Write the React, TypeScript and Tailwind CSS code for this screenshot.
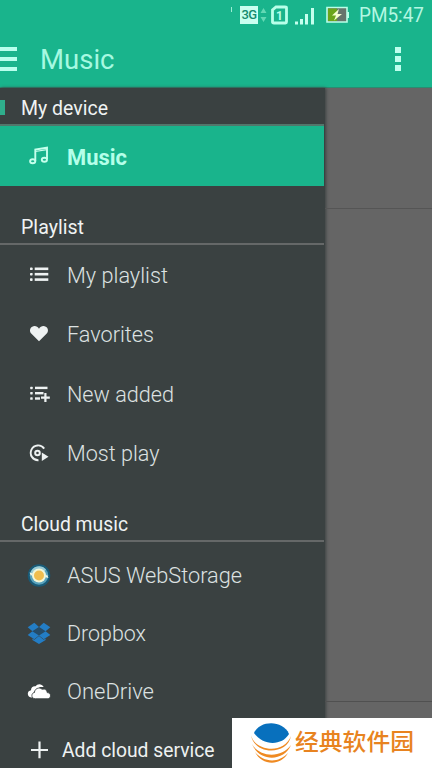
import React from "react";

type IconName = "music" | "list" | "heart" | "added" | "most" | "asus" | "dropbox" | "onedrive" | "plus";

function Icon({ name }: { name: IconName }) {
  return (
    <svg width="24" height="24" viewBox="0 0 24 24" className="block shrink-0">
      {name === "music" && (
        <g fill="none" stroke="#c6ffec" strokeWidth="1.9">
          <path d="M8.3 17V5.500L20 3.700V15" />
          <path d="M8.300 7.500L20 5.700" strokeWidth="1.200" />
          <ellipse cx="5.700" cy="17.300" rx="2.600" ry="2" />
          <ellipse cx="17.400" cy="15.800" rx="2.600" ry="2" />
        </g>
      )}
      {name === "list" && (
        <g fill="#eef2f2">
          <rect x="3" y="3.500" width="2.600" height="2.600" rx=".7" />
          <rect x="3" y="8.900" width="2.600" height="2.600" rx=".7" />
          <rect x="3" y="14.300" width="2.600" height="2.600" rx=".7" />
          <rect x="7.700" y="3.500" width="13.600" height="2.600" />
          <rect x="7.700" y="8.900" width="13.600" height="2.600" />
          <rect x="7.700" y="14.300" width="13.600" height="2.600" />
        </g>
      )}
      {name === "heart" && (
        <path
          fill="#eef2f2"
          d="M12 18.3L4.5 10.8C2.2 8.400 2.700 5 5.200 3.700C7.700 2.400 10.600 3.300 12 5.800C13.400 3.300 16.300 2.400 18.800 3.700C21.300 5 21.800 8.400 19.500 10.800Z"
        />
      )}
      {name === "added" && (
        <g fill="#eef2f2">
          <rect x="3.2" y="3.700" width="2.500" height="2.500" rx=".6" />
          <rect x="3.2" y="8.900" width="2.500" height="2.500" rx=".6" />
          <rect x="3.2" y="14.300" width="2.500" height="2.500" rx=".6" />
          <rect x="8" y="3.700" width="12.500" height="2.400" />
          <rect x="8" y="9" width="8.500" height="2.400" />
          <rect x="8" y="14.300" width="5" height="2.400" />
          <path d="M17.300 10h2.200v3.500h3.300v2.200h-3.300v3.300h-2.200v-3.300H14v-2.200h3.300z" />
        </g>
      )}
      {name === "most" && (
        <g fill="none" stroke="#eef2f2">
          <path d="M11.500 18.200A7.400 7.400 0 1 1 17.200 6.600" strokeWidth="1.9" />
          <circle cx="10.500" cy="11" r="2.300" strokeWidth="2" />
          <path d="M14.800 10.500L21.500 14.800L14.800 19Z" fill="#eef2f2" stroke="none" />
        </g>
      )}
      {name === "asus" && (
        <g>
          <circle cx="12" cy="11.500" r="11.300" fill="#195a76" />
          <circle cx="12" cy="11.500" r="9.300" fill="#5aa3bd" />
          <path d="M3.500 9A9 9 0 0 1 19 5.500L17 8A6 6 0 0 0 7 8.500Z" fill="#9acbd5" />
          <circle cx="12" cy="11.500" r="7" fill="#f2f6d9" />
          <circle cx="12" cy="11.500" r="5" fill="#f1bd4f" />
          <path d="M2.500 8.500l3.500 1-2 2.500zM21.500 14l-3.500-1 2-2.500z" fill="#f4f7e6" />
        </g>
      )}
      {name === "dropbox" && (
        <g>
          <path d="M12 5.200L18.600 9.300L12 13.400L5.400 9.300Z" fill="#254c69" />
          <g fill="#237dc5">
            <path d="M7.300 .8L12 4.900L5.400 9.300L.7 5.300Z" />
            <path d="M16.700 .8L12 4.900L18.600 9.300L23.300 5.300Z" />
            <path d="M.7 13.100L5.400 9.300L12 13.400L7.300 17.200Z" />
            <path d="M23.300 13.100L18.600 9.300L12 13.400L16.700 17.200Z" />
            <path d="M5.400 16.500L7.300 17.800L12 13.900L16.700 17.800L18.600 16.500V18L12 22L5.400 18Z" />
          </g>
        </g>
      )}
      {name === "onedrive" && (
        <g fill="#fff">
          <path d="M5 17.500C2.400 17.500.8 15.800.8 13.700C.8 11.700 2.200 10.500 4 10.200C4 7.500 6.200 5.800 8.600 6.300C10.200 3.800 14.500 3.200 16.700 7H13L7 11.500Z" />
          <path
            d="M8.400 18.700C5.800 18.700 4.700 17 4.900 15.200C5.100 13.500 6.200 12.700 7.500 12.500C7.500 8.900 11.600 6.500 15.200 9.300C18.500 8.500 20 10.300 20.200 12.600C22.500 12.800 23.700 14.200 23.500 16C23.300 17.800 22.200 18.700 20.200 18.700Z"
            stroke="#3a4141"
            strokeWidth=".8"
          />
        </g>
      )}
      {name === "plus" && <path d="M12.500 3.500v16.800M4 12h17" stroke="#eef2f2" strokeWidth="2.200" fill="none" />}
    </svg>
  );
}

function Label({ text, width, className }: { text: string; width: number; className: string }) {
  return (
    <svg width={width} height="28" className="block shrink-0 overflow-visible">
      <text x="0" y="21" textLength={width} lengthAdjust="spacingAndGlyphs" className={className}>
        {text}
      </text>
    </svg>
  );
}

function Row({ icon, text, width, className }: { icon: IconName; text: string; width: number; className: string }) {
  return (
    <div className={"flex shrink-0 items-center gap-4 pl-[27px] " + className}>
      <Icon name={icon} />
      <Label text={text} width={width} className="fill-[#dde2e2] text-[22.5px] font-light" />
    </div>
  );
}

function StatusBar() {
  return (
    <div className="flex h-[30px] items-center pl-[231px]">
      <span className="mb-3 h-[5px] w-px bg-[#9aeed4]" />
      <span className="ml-[8px] flex h-[18px] w-[18px] items-center justify-center bg-[#c9fff0] text-[13px] font-medium tracking-[-0.5px] text-[#168b6e]">
        3G
      </span>
      <svg width="9" height="18" className="ml-px" fill="#62d9b4">
        <path d="M1.500 7L4.500 2L7.500 7zM1.500 11L4.500 16L7.500 11z" />
      </svg>
      <svg width="17" height="20" className="ml-[3px]">
        <path d="M5 2H14Q15.500 2 15.500 3V17Q15.500 18 14.500 18H3Q1.500 18 1.500 17V5Z" fill="none" stroke="#b8ffe9" strokeWidth="2.800" />
        <text x="8.500" y="14.500" textAnchor="middle" className="fill-[#b8ffe9] text-[12px] font-bold">
          1
        </text>
      </svg>
      <svg width="22" height="20" className="ml-[6px]" fill="#c4ffed">
        <path d="M1 16.500h3v3H1zM6 14h3v5.500H6zM11 9h3v10.500h-3zM17 3h3v16.500h-3z" />
      </svg>
      <svg width="24" height="18" className="ml-[10px]">
        <path d="M1 1.500h20v14.500H1z" fill="#66756c" stroke="#b9ffe7" strokeWidth="1.600" />
        <path d="M2 2.500h9v12.500H2z" fill="#6ba51b" />
        <path d="M21 6h2v6h-2z" fill="#b9ffe7" />
        <path d="M13 3L6 9.500h4L8 14.500L16 8h-4.500z" fill="#f5ffcf" />
      </svg>
      <div className="ml-[9px]">
        <Label text="PM5:47" width={65} className="fill-[#b3f7e2] text-[20px] font-normal" />
      </div>
    </div>
  );
}

export default function App() {
  return (
    <div className="relative flex h-[768px] w-[432px] flex-col overflow-hidden bg-[#656565] font-['Roboto','Noto_Sans_CJK_SC',sans-serif]">
      <header className="flex h-[88px] shrink-0 flex-col border-b border-[#288d71] bg-[#19b48c]">
        <StatusBar />
        <div className="flex h-[57px] items-center">
          <div className="flex w-[16.500px] flex-col gap-[6px]">
            <span className="h-[4px] bg-[#b8ffed]" />
            <span className="h-[4px] bg-[#b8ffed]" />
            <span className="h-[4px] bg-[#b8ffed]" />
          </div>
          <div className="ml-[23.500px] pt-[7px]">
            <Label text="Music" width={74.5} className="fill-[#a6f9e1] text-[28px] font-normal" />
          </div>
          <div className="ml-auto mr-[31px] flex flex-col gap-[3px]">
            <span className="size-[6px] bg-[#beffee]" />
            <span className="size-[6px] bg-[#beffee]" />
            <span className="size-[6px] bg-[#beffee]" />
          </div>
        </div>
      </header>
      <div className="flex h-[680px]">
        <aside className="flex w-[325px] shrink-0 flex-col overflow-hidden bg-[#3a4141] pr-px shadow-[1px_0_3px_#3a4141]">
          <div className="flex h-[38px] shrink-0 items-center border-b-2 border-[#52766b]">
            <span className="mt-[2px] h-[15px] w-[5px] bg-[#2fae8c]" />
            <div className="ml-[15.500px] pt-[4px]">
              <Label text="My device" width={87} className="fill-[#f0f3f3] text-[19.500px] font-normal" />
            </div>
          </div>
          <div className="flex h-[60px] shrink-0 items-center gap-4 bg-[#19b48c] pl-[27px]">
            <Icon name="music" />
            <div className="pt-[3px]">
              <Label text="Music" width={60} className="fill-[#b4ffe9] text-[22px] font-bold" />
            </div>
          </div>
          <div className="flex h-[59px] shrink-0 flex-col justify-end border-b-2 border-[#656868] pb-[2px] pl-[20.5px]">
            <Label text="Playlist" width={63} className="fill-[#f0f3f3] text-[19.500px] font-normal" />
          </div>
          <Row icon="list" text="My playlist" width={101} className="mt-px h-[59px]" />
          <Row icon="heart" text="Favorites" width={87} className="h-[60px]" />
          <Row icon="added" text="New added" width={107} className="h-[59px]" />
          <Row icon="most" text="Most play" width={92.5} className="h-[60px]" />
          <div className="flex h-[58px] shrink-0 flex-col justify-end border-b-2 border-[#656868] pb-[2px] pl-[20.5px]">
            <Label text="Cloud music" width={107} className="fill-[#f0f3f3] text-[19.500px] font-normal" />
          </div>
          <Row icon="asus" text="ASUS WebStorage" width={175} className="mt-[5px] h-[58px]" />
          <Row icon="dropbox" text="Dropbox" width={79} className="h-[57px]" />
          <Row icon="onedrive" text="OneDrive" width={87} className="h-[59px]" />
          <div className="flex h-[58px] shrink-0 items-center gap-[10.5px] pl-[27px]">
            <Icon name="plus" />
            <Label text="Add cloud service" width={152.5} className="fill-[#eef1f1] text-[20px] font-normal" />
          </div>
        </aside>
        <main className="flex flex-1 flex-col">
          <div className="h-[121px] border-b border-[#555]" />
          <div className="h-[493px] border-b border-[#505050]" />
        </main>
      </div>
      <div className="absolute bottom-0 right-0 flex h-[50px] w-[200px] items-center bg-white pl-[18px]">
        <svg width="42" height="44" viewBox="0 0 42 44" className="shrink-0">
          <path d="M4 12C10 -1 33-1 39 13C32 25 13 25 4 12Z" fill="#0870bd" />
          <g fill="#ef8a22">
            <path d="M1 14C4 29 33 35 41 15C37 35 4 34 1 14Z" />
            <path d="M2 23C9 36 31 38 41 24C34 41 9 41 2 23Z" />
            <path d="M5 31C13 41 28 43 38 32C31 45 12 45 5 31Z" />
          </g>
        </svg>
        <div className="ml-[3px]">
          <Label text="经典软件园" width={119} className="fill-[#e88320] text-[23px] font-medium" />
        </div>
      </div>
    </div>
  );
}
